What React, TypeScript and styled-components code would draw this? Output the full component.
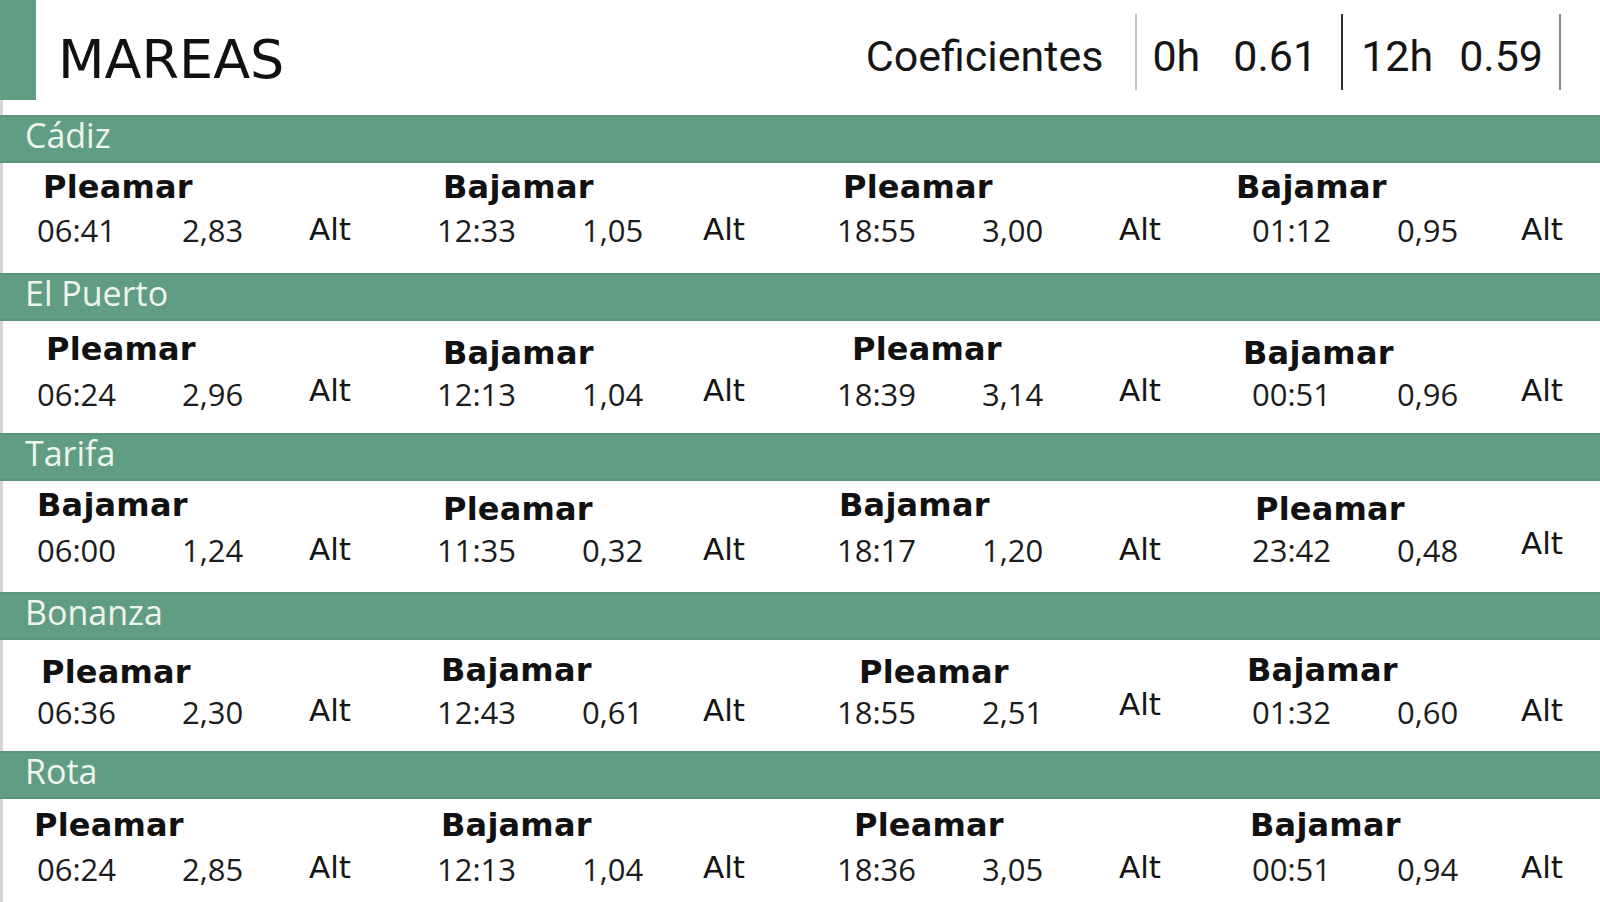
import React from 'react'
import styled, { createGlobalStyle } from 'styled-components'

const GREEN = '#619d83'

const GlobalStyle = createGlobalStyle`
  html, body {
    margin: 0;
    padding: 0;
    background: #ffffff;
  }
  body {
    font-family: 'Open Sans', 'DejaVu Sans', sans-serif;
  }
`

interface Tide {
  kind: 'Pleamar' | 'Bajamar'
  time: string
  height: string
  labelX: number
  labelTop: number
  altTop: number
}

interface Port {
  name: string
  rowHeight: number
  lineTop: number
  tides: Tide[]
}

// column geometry: cell width and the width of the height column
const COLS = [
  { width: 400, valueW: 127 },
  { width: 400, valueW: 121 },
  { width: 415, valueW: 137 },
  { width: 385, valueW: 124 },
]

const t = (
  kind: Tide['kind'],
  time: string,
  height: string,
  labelX: number,
  labelTop: number,
  altTop: number
): Tide => ({ kind, time, height, labelX, labelTop, altTop })

const PORTS: Port[] = [
  {
    name: 'Cádiz',
    rowHeight: 110,
    lineTop: 49,
    tides: [
      t('Pleamar', '06:41', '2,83', 43, 7, -1),
      t('Bajamar', '12:33', '1,05', 43, 7, -1),
      t('Pleamar', '18:55', '3,00', 43, 7, -1),
      t('Bajamar', '01:12', '0,95', 21, 7, -1),
    ],
  },
  {
    name: 'El Puerto',
    rowHeight: 112,
    lineTop: 55,
    tides: [
      t('Pleamar', '06:24', '2,96', 46, 11, -4),
      t('Bajamar', '12:13', '1,04', 43, 15, -4),
      t('Pleamar', '18:39', '3,14', 52, 11, -4),
      t('Bajamar', '00:51', '0,96', 28, 15, -4),
    ],
  },
  {
    name: 'Tarifa',
    rowHeight: 111,
    lineTop: 51,
    tides: [
      t('Bajamar', '06:00', '1,24', 37, 7, -1),
      t('Pleamar', '11:35', '0,32', 43, 11, -1),
      t('Bajamar', '18:17', '1,20', 39, 7, -1),
      t('Pleamar', '23:42', '0,48', 40, 11, -7),
    ],
  },
  {
    name: 'Bonanza',
    rowHeight: 111,
    lineTop: 54,
    tides: [
      t('Pleamar', '06:36', '2,30', 41, 15, -2),
      t('Bajamar', '12:43', '0,61', 41, 13, -2),
      t('Pleamar', '18:55', '2,51', 59, 15, -8),
      t('Bajamar', '01:32', '0,60', 32, 13, -2),
    ],
  },
  {
    name: 'Rota',
    rowHeight: 120,
    lineTop: 52,
    tides: [
      t('Pleamar', '06:24', '2,85', 34, 9, -2),
      t('Bajamar', '12:13', '1,04', 41, 9, -2),
      t('Pleamar', '18:36', '3,05', 54, 9, -2),
      t('Bajamar', '00:51', '0,94', 35, 9, -2),
    ],
  },
]

const Page = styled.div`
  width: 1600px;
  height: 902px;
  overflow: hidden;
  background: linear-gradient(to right, #d5d5d5 3px, #ffffff 3px);
  display: flex;
  flex-direction: column;
`

const Header = styled.header`
  height: 115px;
  flex: none;
  display: flex;
  align-items: flex-start;
`

const Accent = styled.div`
  width: 36px;
  height: 100px;
  background: ${GREEN};
  flex: none;
`

const Title = styled.h1`
  margin: 29px 0 0 22px;
  font-family: 'DejaVu Sans', sans-serif;
  font-weight: 400;
  font-size: 54px;
  line-height: 62px;
  color: #111111;
`

const Coefficients = styled.div`
  margin: 14px 39px 0 auto;
  display: flex;
  align-items: flex-start;
`

const CoefText = styled.div<{ $gap?: number }>`
  margin-top: 17px;
  display: flex;
  gap: ${(p) => p.$gap ?? 0}px;
  font-family: Roboto, 'Liberation Sans', sans-serif;
  font-size: 43px;
  line-height: 50px;
  color: #151515;
`

const Divider = styled.span<{ $tone: string; $before: number; $after: number }>`
  width: 2px;
  height: 76px;
  background: ${(p) => p.$tone};
  margin: 0 ${(p) => p.$after}px 0 ${(p) => p.$before}px;
  flex: none;
`

const Band = styled.div`
  box-sizing: border-box;
  height: 48px;
  flex: none;
  background: ${GREEN};
  border-top: 2px solid #5a957b;
  border-bottom: 2px solid #5a957b;
  padding-left: 25px;
  font-family: 'Open Sans', sans-serif;
  font-size: 34px;
  line-height: 36px;
  color: #eef5ec;
  white-space: nowrap;
`

const Row = styled.div<{ $h: number }>`
  height: ${(p) => p.$h}px;
  flex: none;
  display: flex;
`

const Cell = styled.div<{ $w: number; $valueW: number; $lineTop: number }>`
  width: ${(p) => p.$w}px;
  flex: none;
  display: grid;
  grid-template-columns: 37px 145px ${(p) => p.$valueW}px auto;
  grid-template-rows: ${(p) => p.$lineTop}px auto;
  align-items: start;
`

const Kind = styled.div<{ $x: number; $top: number }>`
  grid-column: 1 / -1;
  grid-row: 1;
  padding-left: ${(p) => p.$x}px;
  margin-top: ${(p) => p.$top}px;
  font-family: 'DejaVu Sans', sans-serif;
  font-weight: 700;
  font-size: 32px;
  line-height: 34px;
  letter-spacing: 0.2px;
  color: #111111;
  white-space: nowrap;
`

const Num = styled.div<{ $col: number }>`
  grid-row: 2;
  grid-column: ${(p) => p.$col};
  font-family: 'Open Sans', sans-serif;
  font-size: 31px;
  line-height: 36px;
  color: #1c1c1c;
  white-space: nowrap;
`

const Alt = styled.div<{ $top: number }>`
  grid-row: 2;
  grid-column: 4;
  margin-top: ${(p) => p.$top}px;
  font-family: 'DejaVu Sans', sans-serif;
  font-size: 31px;
  line-height: 36px;
  color: #151515;
`

const PortSection = ({ port }: { port: Port }) => (
  <>
    <Band>{port.name}</Band>
    <Row $h={port.rowHeight}>
      {port.tides.map((tide, i) => (
        <Cell key={i} $w={COLS[i].width} $valueW={COLS[i].valueW} $lineTop={port.lineTop}>
          <Kind $x={tide.labelX} $top={tide.labelTop}>
            {tide.kind}
          </Kind>
          <Num $col={2}>{tide.time}</Num>
          <Num $col={3}>{tide.height}</Num>
          <Alt $top={tide.altTop}>Alt</Alt>
        </Cell>
      ))}
    </Row>
  </>
)

export default function App() {
  return (
    <>
      <GlobalStyle />
      <Page>
        <Header>
          <Accent />
          <Title>MAREAS</Title>
          <Coefficients>
            <CoefText>Coeficientes</CoefText>
            <Divider $tone="#c4c4c4" $before={32} $after={15} />
            <CoefText $gap={33}>
              <span>0h</span>
              <span>0.61</span>
            </CoefText>
            <Divider $tone="#2e2e2e" $before={24} $after={18} />
            <CoefText $gap={26}>
              <span>12h</span>
              <span>0.59</span>
            </CoefText>
            <Divider $tone="#8a8a8a" $before={16} $after={0} />
          </Coefficients>
        </Header>
        {PORTS.map((port) => (
          <PortSection key={port.name} port={port} />
        ))}
      </Page>
    </>
  )
}
